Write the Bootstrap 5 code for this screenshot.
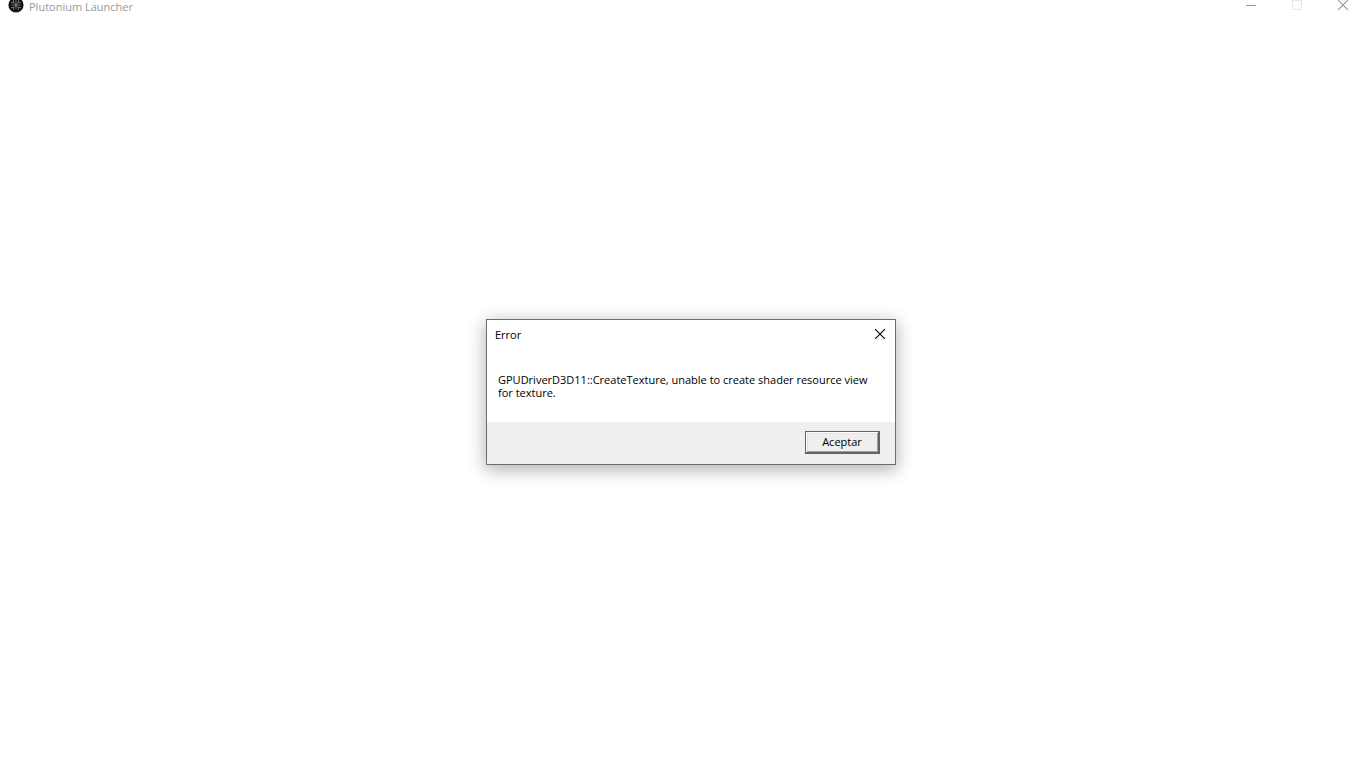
<!DOCTYPE html>
<html lang="es">
<head>
<meta charset="utf-8">
<meta name="viewport" content="width=device-width, initial-scale=1">
<title>Plutonium Launcher</title>
<link href="https://cdn.jsdelivr.net/npm/bootstrap@5.3.0/dist/css/bootstrap.min.css" rel="stylesheet">
<style>
  body { font-family: "Open Sans", "Noto Sans", sans-serif; color: #000; background: #fff; }
  .title-bar { height: 16px; padding-left: 8px; color: #999; }
  .app-name { font-size: 11px; line-height: 14px; margin-left: 5px; font-weight: 400; }
  .app-logo { width: 16px; height: 14px; }
  .win-btn { width: 46px; height: 16px; padding: 0; border: 0; background: none; color: #999; display: flex; justify-content: center; }
  .win-btn:disabled { color: #e6e6e6; }
  .message-box { width: 410px; border: 1px solid #6d6d6d; background: #fff; font-size: 11px; line-height: 13px; box-shadow: 0 4px 16px 1px rgba(0,0,0,.3); }
  .box-head { height: 30px; padding-left: 8px; }
  .box-name { font-size: 11px; line-height: 16px; font-weight: 400; }
  .box-close { width: 30px; height: 28px; padding: 0; border: 0; background: none; color: #000; display: flex; align-items: center; justify-content: center; }
  .box-text { padding: 23px 24px 23px 11px; }
  .box-foot { background: #efefef; padding: 9px 15px 10px; }
  .accept { width: 75px; height: 23px; padding: 0 0 2px; line-height: 13px; color: #000; background: #efefef; border: 1px solid #646464; border-right-width: 2px; border-bottom-width: 2px;
    box-shadow: inset 1px 1px #fff, inset -1px -1px #a0a0a0, inset 2px 2px #e3e3e3; }
</style>
</head>
<body>
<div class="d-flex flex-column vh-100 overflow-hidden">
  <header class="title-bar d-flex align-items-start">
    <svg class="app-logo" viewBox="0 0 16 14" aria-hidden="true">
      <circle cx="8" cy="5" r="7.6" fill="#131313"/>
      <g fill="none" stroke="#888" stroke-width=".8">
        <path d="M8 .5v9M3 2.500h3l2 2.500 2-2.500h3M3 7.500h3L8 5l2 2.500h3M3.500 5h9M5.500 0v2.500M10.500 0v2.500M5.500 7.500v2.500M10.500 7.500v2.500"/>
      </g>
    </svg>
    <h1 class="app-name mb-0 me-auto">Plutonium Launcher</h1>
    <button type="button" class="win-btn" aria-label="Minimizar"><svg width="10" height="11" viewBox="0 0 10 11"><path d="M0 5.500h10" stroke="currentColor"/></svg></button>
    <button type="button" class="win-btn" aria-label="Maximizar" disabled><svg width="10" height="11" viewBox="0 0 10 11"><path d="M.5 .5h9v9h-9z" fill="none" stroke="currentColor"/></svg></button>
    <button type="button" class="win-btn" aria-label="Cerrar"><svg width="10" height="11" viewBox="0 0 10 11"><path d="M0 0l10 10M10 0L0 10" stroke="currentColor" stroke-width="1.1"/></svg></button>
  </header>
  <main class="flex-grow-1 d-flex align-items-center justify-content-center ps-3">
    <section class="message-box" role="alertdialog" aria-labelledby="boxName" aria-describedby="boxText">
      <div class="box-head d-flex align-items-start justify-content-between">
        <h2 class="box-name mb-0 align-self-center" id="boxName">Error</h2>
        <button type="button" class="box-close" aria-label="Cerrar"><svg width="10" height="10" viewBox="0 0 10 10"><path d="M0 0l10 10M10 0L0 10" stroke="currentColor" stroke-width="1.1"/></svg></button>
      </div>
      <p class="box-text mb-0" id="boxText">GPUDriverD3D11::CreateTexture, unable to create shader resource view for texture.</p>
      <div class="box-foot d-flex justify-content-end">
        <button type="button" class="accept">Aceptar</button>
      </div>
    </section>
  </main>
</div>
<script src="https://cdn.jsdelivr.net/npm/bootstrap@5.3.0/dist/js/bootstrap.bundle.min.js"></script>
</body>
</html>
